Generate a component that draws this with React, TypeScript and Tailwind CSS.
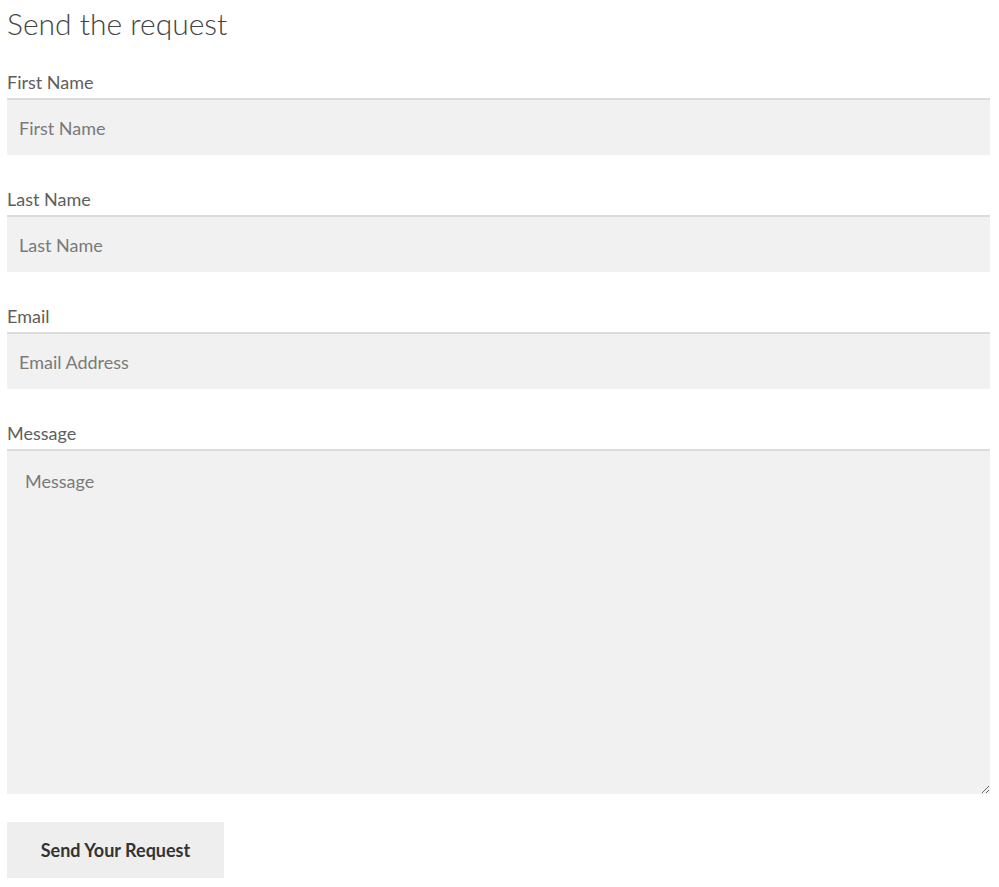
export default function App() {
  return (
    <div
      className="bg-white px-[7px] pr-[9px] pt-[3px] text-[#5e5e5e]"
      style={{ fontFamily: "Lato, 'Open Sans', sans-serif" }}
    >
      <h2 className="text-[30px] font-light leading-[40px] text-[#444]">Send the request</h2>
      <form className="mt-[26px]">
        <div className="mb-[31px]">
          <label className="block pb-[3px] text-[18px] leading-[26px]">First Name</label>
          <input
            placeholder="First Name"
            className="block h-[57px] w-full border-t-2 border-[#dcdcdc] bg-[#f1f1f1] px-3 text-[18px] text-[#555] outline-none placeholder:text-[#7a7a7a]"
          />
        </div>
        <div className="mb-[31px]">
          <label className="block pb-[3px] text-[18px] leading-[26px]">Last Name</label>
          <input
            placeholder="Last Name"
            className="block h-[57px] w-full border-t-2 border-[#dcdcdc] bg-[#f1f1f1] px-3 text-[18px] text-[#555] outline-none placeholder:text-[#7a7a7a]"
          />
        </div>
        <div className="mb-[31px]">
          <label className="block pb-[3px] text-[18px] leading-[26px]">Email</label>
          <input
            placeholder="Email Address"
            className="block h-[57px] w-full border-t-2 border-[#dcdcdc] bg-[#f1f1f1] px-3 text-[18px] text-[#555] outline-none placeholder:text-[#7a7a7a]"
          />
        </div>
        <div className="mb-[28px]">
          <label className="block pb-[3px] text-[18px] leading-[26px]">Message</label>
          <textarea
            placeholder="Message"
            className="block h-[345px] w-full border-t-2 border-[#dcdcdc] bg-[#f1f1f1] px-[18px] pt-[17px] text-[18px] text-[#555] outline-none placeholder:text-[#7a7a7a]"
          />
        </div>
        <button
          type="button"
          className="h-[56px] w-[217px] bg-[#eeeeee] text-[18px] font-bold text-[#333]"
        >
          Send Your Request
        </button>
      </form>
    </div>
  );
}
